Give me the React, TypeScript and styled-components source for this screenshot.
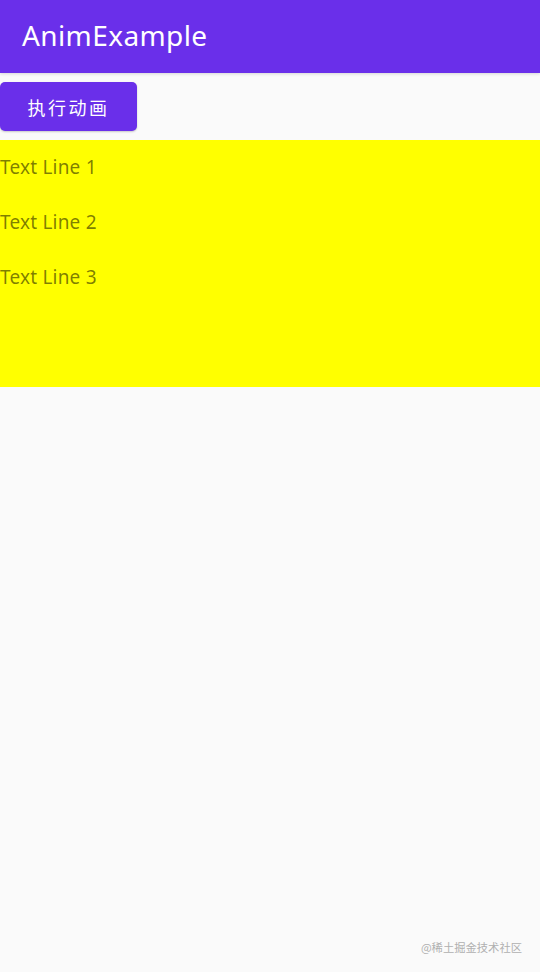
import React from 'react';
import styled, { createGlobalStyle } from 'styled-components';

const GlobalStyle = createGlobalStyle`
	html, body {
		margin: 0;
		padding: 0;
		background: #fafafa;
		font-family: Roboto, "Noto Sans", "Noto Sans CJK SC", sans-serif;
	}
`;

const Screen = styled.div`
	width: 540px;
	height: 972px;
	display: flex;
	flex-direction: column;
	background: #fafafa;
	position: relative;
	overflow: hidden;
`;

const AppBar = styled.header`
	height: 73px;
	display: flex;
	align-items: center;
	padding: 0 0 3px 22px;
	box-sizing: border-box;
	background: #6a2fea;
	box-shadow: 0 1px 3px rgba(0, 0, 0, 0.15);
`;

const Title = styled.h1`
	margin: 0;
	color: #fff;
	font-family: "Noto Sans", Roboto, sans-serif;
	font-size: 28px;
	font-weight: 400;
	letter-spacing: 0.4px;
`;

const Toolbar = styled.div`
	padding: 9px 0 9px 0;
	display: flex;
`;

const ActionButton = styled.button`
	width: 137px;
	height: 49px;
	border: none;
	border-radius: 5px;
	background: #6a2fea;
	color: #fff;
	font-family: "Noto Sans CJK SC", sans-serif;
	font-size: 18px;
	font-weight: 400;
	letter-spacing: 2.5px;
	box-shadow: 0 1px 2px rgba(0, 0, 0, 0.2);
	cursor: pointer;
`;

const Panel = styled.section`
	height: 247px;
	background: #ffff00;
	display: flex;
	flex-direction: column;
	gap: 30px;
	padding-top: 15px;
	box-sizing: border-box;
`;

const Line = styled.div`
	font-family: "Noto Sans", Roboto, sans-serif;
	font-size: 19px;
	line-height: 25px;
	letter-spacing: 0.2px;
	color: rgba(0, 0, 0, 0.52);
`;

const Watermark = styled.div`
	position: absolute;
	right: 18px;
	bottom: 17px;
	font-family: "Noto Sans CJK SC", sans-serif;
	font-size: 11.3px;
	color: #b0b0b0;
`;

const App = () => {
	return (
		<Screen>
			<GlobalStyle />
			<AppBar>
				<Title>AnimExample</Title>
			</AppBar>
			<Toolbar>
				<ActionButton>执行动画</ActionButton>
			</Toolbar>
			<Panel>
				<Line>Text Line 1</Line>
				<Line>Text Line 2</Line>
				<Line>Text Line 3</Line>
			</Panel>
			<Watermark>@稀土掘金技术社区</Watermark>
		</Screen>
	);
};

export default App;
